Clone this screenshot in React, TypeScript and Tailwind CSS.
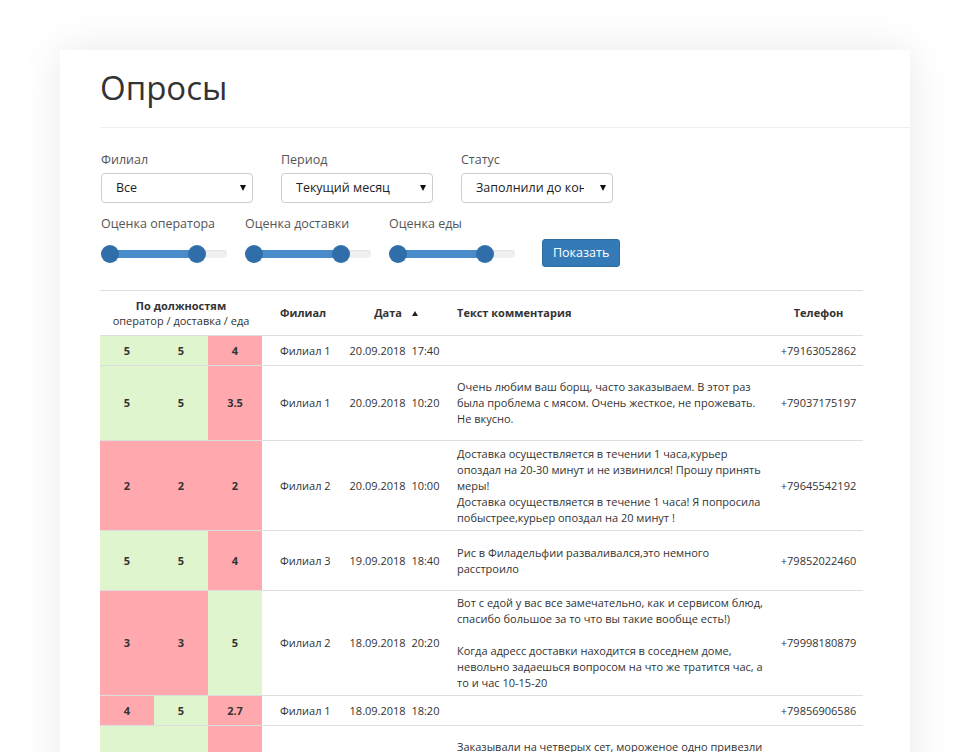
import React from "react";

type Score = [string, boolean];

type Row = {
  scores: Score[];
  branch: string;
  date: string;
  time: string;
  comment: string[];
  phone: string;
  height: string;
};

const rows: Row[] = [
  {
    scores: [["5", true], ["5", true], ["4", false]],
    branch: "Филиал 1",
    date: "20.09.2018",
    time: "17:40",
    comment: [],
    phone: "+79163052862",
    height: "h-[30px]",
  },
  {
    scores: [["5", true], ["5", true], ["3.5", false]],
    branch: "Филиал 1",
    date: "20.09.2018",
    time: "10:20",
    comment: [
      "Очень любим ваш борщ, часто заказываем. В этот раз",
      "была проблема с мясом. Очень жесткое, не прожевать.",
      "Не вкусно.",
    ],
    phone: "+79037175197",
    height: "h-[75px]",
  },
  {
    scores: [["2", false], ["2", false], ["2", false]],
    branch: "Филиал 2",
    date: "20.09.2018",
    time: "10:00",
    comment: [
      "Доставка осуществляется в течении 1 часа,курьер",
      "опоздал на 20-30 минут и не извинился! Прошу принять",
      "меры!",
      "Доставка осуществляется в течение 1 часа! Я попросила",
      "побыстрее,курьер опоздал на 20 минут !",
    ],
    phone: "+79645542192",
    height: "h-[90px]",
  },
  {
    scores: [["5", true], ["5", true], ["4", false]],
    branch: "Филиал 3",
    date: "19.09.2018",
    time: "18:40",
    comment: ["Рис в Филадельфии разваливался,это немного", "расстроило"],
    phone: "+79852022460",
    height: "h-[60px]",
  },
  {
    scores: [["3", false], ["3", false], ["5", true]],
    branch: "Филиал 2",
    date: "18.09.2018",
    time: "20:20",
    comment: [
      "Вот с едой у вас все замечательно, как и сервисом блюд,",
      "спасибо большое за то что вы такие вообще есть!)",
      "",
      "Когда адресс доставки находится в соседнем доме,",
      "невольно задаешься вопросом на что же тратится час, а",
      "то и час 10-15-20",
    ],
    phone: "+79998180879",
    height: "h-[105px]",
  },
  {
    scores: [["4", false], ["5", true], ["2.7", false]],
    branch: "Филиал 1",
    date: "18.09.2018",
    time: "18:20",
    comment: [],
    phone: "+79856906586",
    height: "h-[30px]",
  },
  {
    scores: [["5", true], ["5", true], ["3", false]],
    branch: "Филиал 3",
    date: "17.09.2018",
    time: "21:10",
    comment: [
      "Заказывали на четверых сет, мороженое одно привезли",
      "растаявшее, второе забыли положить.",
      "В остальном все хорошо.",
    ],
    phone: "+79261187430",
    height: "h-[74px]",
  },
];

function FakeSelect({ label, value }: { label: string; value: string }) {
  return (
    <div className="flex flex-col w-[152px]">
      <span className="text-[12.5px] leading-[17px] text-[#555]">{label}</span>
      <div className="mt-[5px] h-[30px] rounded-[4px] border border-[#ccc] bg-white flex items-center pl-[14px] pr-[6px]">
        <span className="flex-1 overflow-hidden whitespace-nowrap text-[12.5px] text-[#222] mr-[16px]">{value}</span>
        <span className="w-0 h-0 border-l-[3px] border-r-[3px] border-t-[6px] border-l-transparent border-r-transparent border-t-[#111]" />
      </div>
    </div>
  );
}

function Slider({ label }: { label: string }) {
  return (
    <div className="flex flex-col w-[126px]">
      <span className="text-[12.5px] leading-[16px] text-[#555] whitespace-nowrap">{label}</span>
      <div className="mt-[8px] h-[28px] flex items-center">
        <div className="relative w-[126px] h-[8px] rounded-full bg-[#f0f0f0] shadow-[inset_0_1px_1px_rgba(0,0,0,0.06)]">
          <div className="absolute top-0 left-[9px] w-[87px] h-[8px] bg-[#4a8bcb]" />
          <div className="absolute top-[-5px] left-0 w-[18px] h-[18px] rounded-full bg-[#2f6ea8]" />
          <div className="absolute top-[-5px] left-[87px] w-[18px] h-[18px] rounded-full bg-[#2f6ea8]" />
        </div>
      </div>
    </div>
  );
}

export default function App() {
  return (
    <div className="min-h-screen bg-white pt-[50px] pl-[60px] font-['Open_Sans',sans-serif] text-[#333]">
      <div className="w-[850px] bg-white shadow-[0_0_40px_rgba(0,0,0,0.09)] pt-[18px] pb-[40px]">
        <h1 className="pl-[40px] text-[33px] leading-[40px] font-normal text-[#333]">Опросы</h1>
        <div className="ml-[40px] mt-[19px] border-b border-[#eee]" />

        <div className="pl-[41px] mt-[23px] flex gap-[28px]">
          <FakeSelect label="Филиал" value="Все" />
          <FakeSelect label="Период" value="Текущий месяц" />
          <FakeSelect label="Статус" value="Заполнили до конца" />
        </div>

        <div className="pl-[41px] mt-[13px] flex items-end gap-[18px]">
          <Slider label="Оценка оператора" />
          <Slider label="Оценка доставки" />
          <Slider label="Оценка еды" />
          <button className="ml-[9px] mb-[1px] h-[28px] px-[10px] rounded-[3px] bg-[#337ab7] text-white text-[12.5px] border border-[#2e6da4]">
            Показать
          </button>
        </div>

        <div className="pl-[40px] mt-[22px]">
          <table className="table-fixed border-collapse w-[763px] text-[11px] leading-[16px] text-[#333]">
            <colgroup>
              <col className="w-[54px]" />
              <col className="w-[54px]" />
              <col className="w-[54px]" />
              <col className="w-[80px]" />
              <col className="w-[105px]" />
              <col className="w-[321px]" />
              <col className="w-[95px]" />
            </colgroup>
            <thead>
              <tr className="h-[45px] border-t border-b border-[#ddd]">
                <th colSpan={3} className="text-center align-middle">
                  <div className="font-bold leading-[15px]">По должностям</div>
                  <div className="font-normal leading-[15px]">оператор / доставка / еда</div>
                </th>
                <th className="text-left pl-[18px] font-bold">Филиал</th>
                <th className="text-center font-bold pl-[3px]">
                  <span className="inline-flex items-center">
                    Дата
                    <span className="ml-[10px] w-0 h-0 border-l-[3.5px] border-r-[3.5px] border-b-[5px] border-l-transparent border-r-transparent border-b-[#222]" />
                  </span>
                </th>
                <th className="text-left pl-[10px] font-bold">Текст комментария</th>
                <th className="text-center font-bold pl-[6px]">Телефон</th>
              </tr>
            </thead>
            <tbody>
              {rows.map((row, i) => (
                <tr key={i} className={`${row.height} border-b border-[#ddd]`}>
                  {row.scores.map(([v, good], j) => (
                    <td
                      key={j}
                      className={`text-center align-middle font-bold ${good ? "bg-[#dff5cd]" : "bg-[#ffa8ae]"}`}
                    >
                      {v}
                    </td>
                  ))}
                  <td className="pl-[18px] align-middle whitespace-nowrap">{row.branch}</td>
                  <td className="text-center align-middle whitespace-nowrap">
                    {row.date}&nbsp;&nbsp;{row.time}
                  </td>
                  <td className="pl-[10px] align-middle">
                    {row.comment.map((line, k) => (
                      <div key={k} className="h-[16px] whitespace-nowrap">
                        {line || "\u00a0"}
                      </div>
                    ))}
                  </td>
                  <td className="text-center align-middle pl-[6px]">{row.phone}</td>
                </tr>
              ))}
            </tbody>
          </table>
        </div>
      </div>
    </div>
  );
}
